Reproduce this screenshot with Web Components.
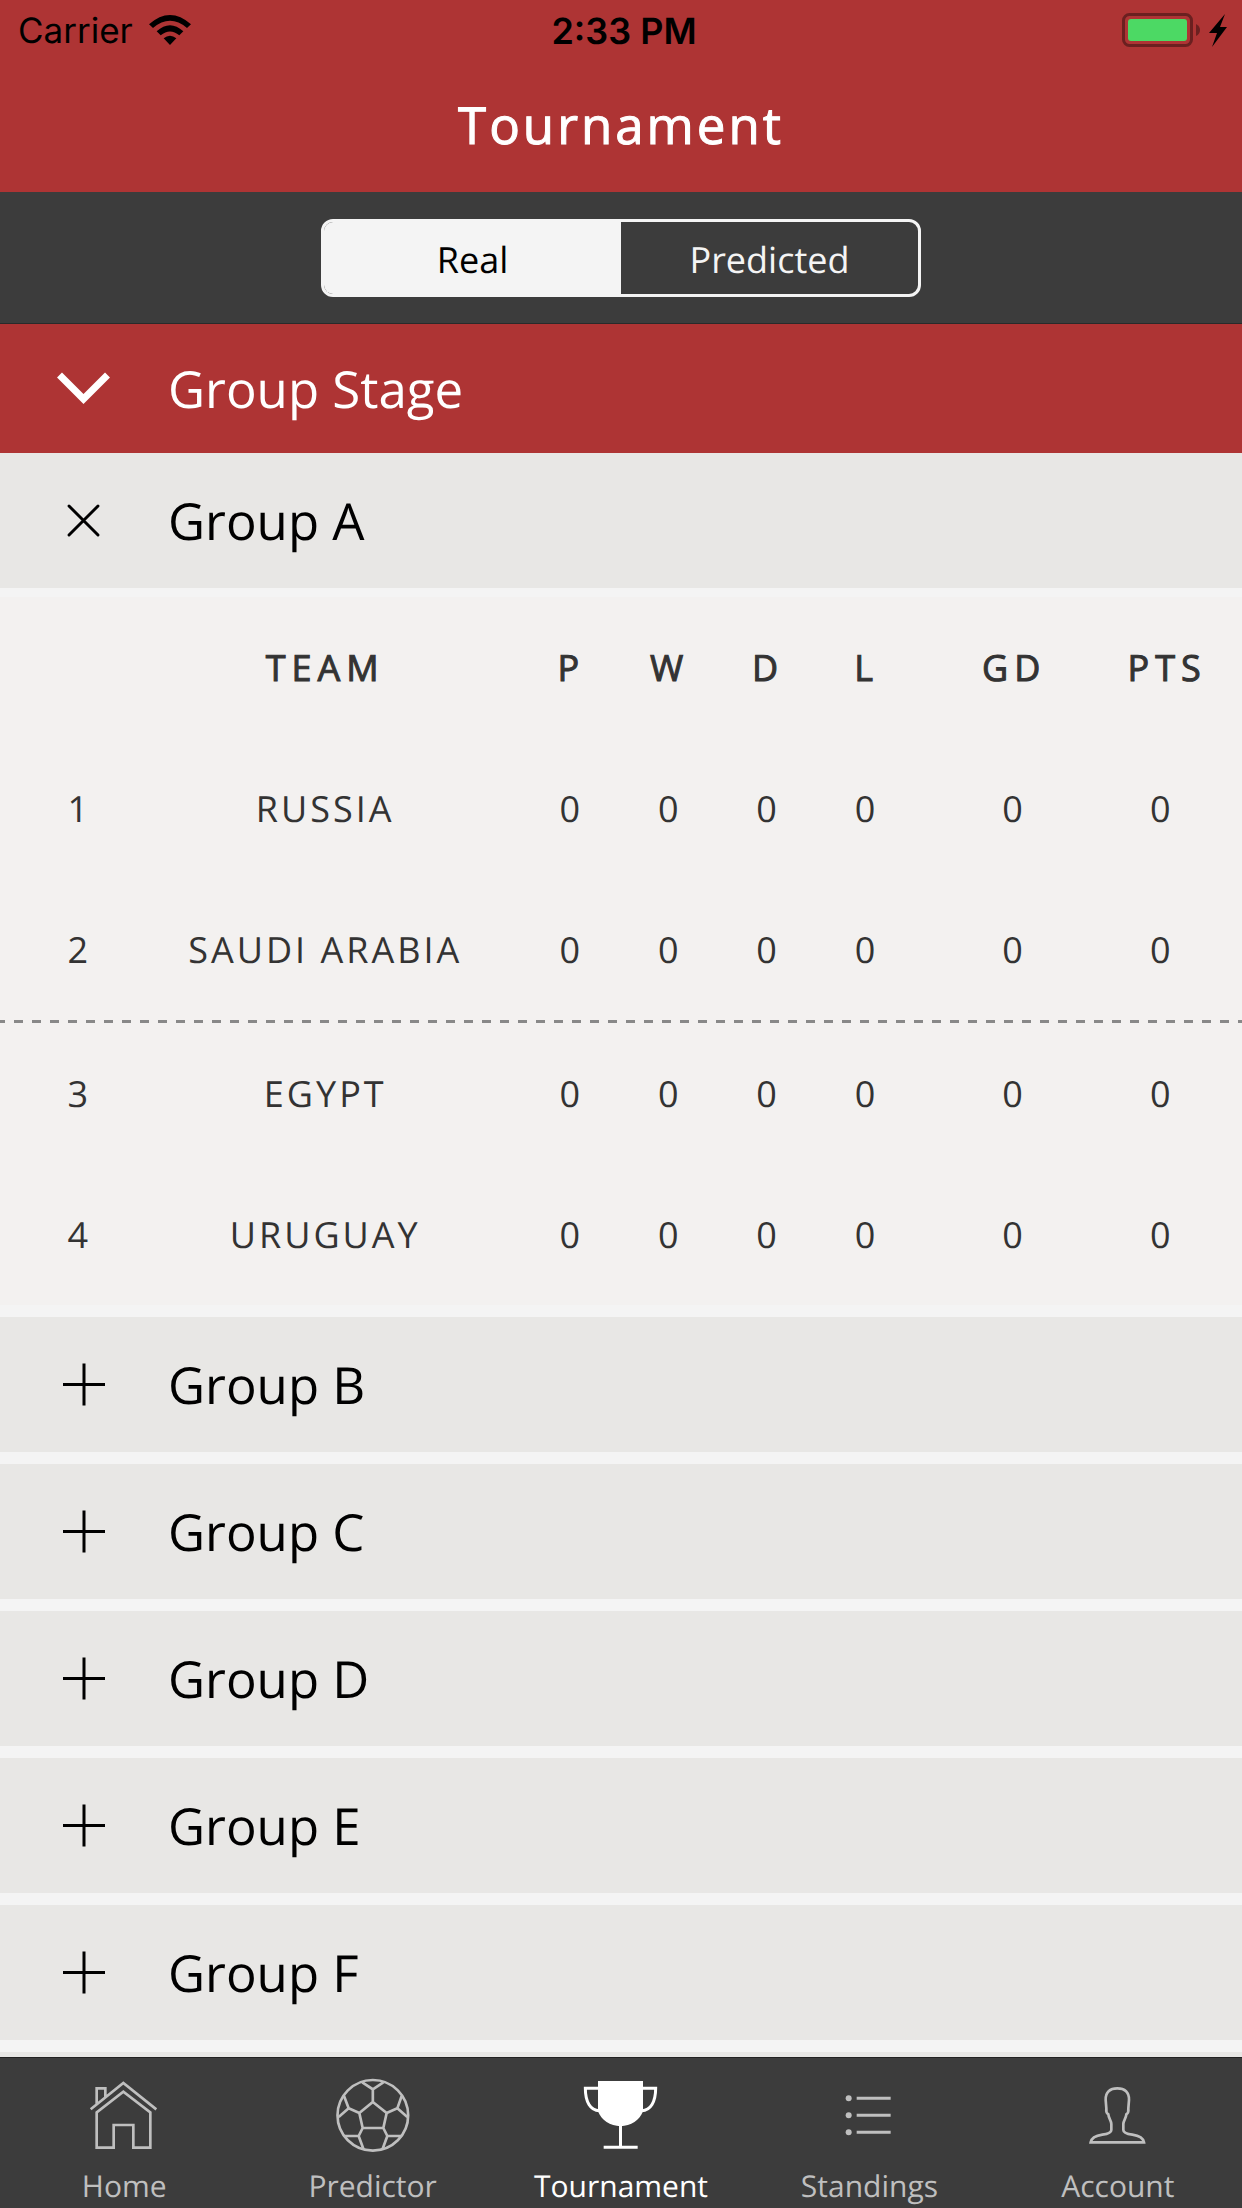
<!DOCTYPE html>
<html lang="en">
<head>
<meta charset="utf-8">
<meta name="viewport" content="width=device-width">
<title>Tournament</title>
<style>
  body { margin: 0; font-family: "Open Sans", "Noto Sans", sans-serif; text-rendering: geometricPrecision; }
</style>
</head>
<body>
<tournament-app></tournament-app>

<script>
const define = (name, css, html, setup) => {
  const template = document.createElement('template');
  template.innerHTML = `<style>*{box-sizing:border-box}${css}</style>${html}`;
  customElements.define(name, class extends HTMLElement {
    connectedCallback() {
      if (this.shadowRoot) return;
      this.attachShadow({ mode: 'open' }).append(template.content.cloneNode(true));
      if (setup) setup(this, this.shadowRoot);
    }
  });
};

define('status-bar', `
  :host { display: grid; grid-template-columns: 1fr auto 1fr; align-items: center; height: 62px;
          padding: 0 12px 0 18px; font: 400 36px/62px Inter, "Liberation Sans", sans-serif; color: #000; }
  .left, .right { display: flex; align-items: center; }
  .left { gap: 16px; font-size: 35px; }
  .right { justify-content: flex-end; }
  time { font-weight: 600; }
  svg { display: block; }
`, `
  <span class="left"><span>Carrier</span>
    <svg width="42" height="62" viewBox="450 0 126 186" aria-label="Wi-Fi" role="img">
      <path d="M450 73Q513 17 576 73L564 84Q513 41 462 84ZM473 94Q513 58 553 94L541 106Q513 83 485 106ZM494 115Q513 100 532 115L513 135Z"/>
    </svg></span>
  <time>2:33 PM</time>
  <span class="right">
    <svg width="108" height="62" viewBox="0 0 108 62" aria-label="Battery charging" role="img">
      <rect x="1.5" y="14.5" width="68" height="31" rx="6" fill="none" stroke="#6b2020" stroke-width="3"/>
      <rect x="6" y="19" width="59" height="22" rx="3" fill="#4cd964"/>
      <path d="M74 24q4 2 4 6t-4 6z" fill="#6b2020"/>
      <path d="M103 14L87 33H95L90 47L105 27H98Z"/>
    </svg></span>
`);

define('title-bar', `
  :host { display: block; background: #ae3434; padding-bottom: 6px; }
  h1 { margin: 0; font-weight: 400; -webkit-text-stroke: 1px currentColor; font-size: 51px; line-height: 124px;
       letter-spacing: 3px; color: #fff; text-align: center; }
`, `<status-bar></status-bar><h1><slot></slot></h1>`);

define('segment-switch', `
  :host { display: flex; justify-content: center; padding: 27px 0 26px; background: #3c3c3c; border-bottom: 1px solid #2a2a2a; }
  div { display: grid; grid-template-columns: 1fr 1fr; width: 600px; max-width: 90%; height: 78px; border: 3px solid #f4f4f4; border-radius: 12px; overflow: hidden; }
  button { border: 0; margin: 0; padding: 3px 0 0; font: inherit; font-size: 36px; line-height: 69px; text-rendering: inherit; background: none; color: #f4f4f4; }
  button[aria-pressed="true"] { background: #f4f4f4; color: #000; }
`, `<div role="group" aria-label="Results">
  <button type="button" aria-pressed="true">Real</button><button type="button" aria-pressed="false">Predicted</button>
</div>`, (host, root) => {
  const buttons = root.querySelectorAll('button');
  buttons.forEach(b => b.addEventListener('click', () =>
    buttons.forEach(o => o.setAttribute('aria-pressed', String(o === b)))));
});

const rowIcons = {
  chevron: '<path d="M2.500 13L26.500 37L50.500 13" stroke-width="7"/>',
  close: '<path d="M12 12L41 41M41 12L12 41" stroke-width="3" stroke-linecap="round"/>',
  plus: '<path d="M6 26.500H48M27 5.500V47.500" stroke-width="3"/>'
};

define('section-row', `
  :host { display: block; --row: 135px; }
  :host([stage]) { --row: 129px; }
  h2 { margin: 0; font-weight: inherit; }
  button { display: flex; align-items: center; gap: 57px; width: 100%; height: var(--row); border: 0; padding: 0 57px;
           font: inherit; font-size: 51px; line-height: 69px; text-rendering: inherit; text-align: left; color: #000; background: #e8e7e5; }
  :host([stage]) button { color: #fff; background: #ae3434; }
  svg { flex: none; display: block; fill: none; stroke: currentColor; }
`, `<h2><button type="button"><svg width="54" height="54" viewBox="0 0 54 54" aria-hidden="true"></svg><span><slot></slot></span></button></h2>`,
(host, root) => {
  const icon = host.getAttribute('icon') || 'plus';
  root.querySelector('svg').innerHTML = rowIcons[icon];
  root.querySelector('button').setAttribute('aria-expanded', String(icon !== 'plus'));
});

define('standings-table', `
  :host { display: block; margin-top: 9px; background: #f3f1f0; color: #333; font-size: 36px; line-height: 49px; }
  table, thead, tbody { display: block; }
  tr { display: grid; align-items: center; padding: 0 31px 0 30px; height: 141px;
       grid-template-columns: minmax(0,1fr) minmax(0,4fr) repeat(4, minmax(0,1fr)) minmax(0,2fr) minmax(0,1fr); }
  tr.cut { height: 144px; padding-bottom: 3px;
       background: linear-gradient(90deg, #888 50%, transparent 50%) -4px 100% / 18px 3px repeat-x; }
  th, td { padding: 0 15px; text-align: center; letter-spacing: 3px; font-weight: 400; white-space: nowrap; }
  thead th { -webkit-text-stroke: 1px currentColor; letter-spacing: 6px; }
`, `<table><thead><tr><td></td></tr></thead><tbody></tbody></table>`, (host, root) => {
  root.querySelector('thead tr').innerHTML = '<td></td>' +
    ['TEAM', 'P', 'W', 'D', 'L', 'GD', 'PTS'].map(t => `<th scope="col">${t}</th>`).join('');
  root.querySelector('tbody').innerHTML = host.getAttribute('teams').split(',').map((team, i) =>
    `<tr class="${i === 1 ? 'cut' : ''}"><td>${i + 1}</td><th scope="row">${team}</th>${'<td>0</td>'.repeat(6)}</tr>`).join('');
});

define('group-list', `
  :host { display: flex; flex-direction: column; gap: 12px; background: #f4f4f4; }
`, `<slot></slot>`);

const tabIcons = {
  home: ['256 168 234 234', '<path d="M273 268L371 189L470 268M291 251V205H317V231M291 277V383H342V315H401V383H452V277L371 215Z"/>'],
  ball: ['1001 168 234 234', '<circle cx="1117.500" cy="286" r="106"/><path d="M1117.500 246L1159 279L1149 324H1087L1077 279ZM1117.500 246V208L1086 187M1117.500 208L1149 187M1077 279L1045 265L1031 228M1045 265L1015 291M1159 279L1191 265L1204 228M1191 265L1221 291M1087 324L1075 348L1089 386M1075 348H1032M1149 324L1161 348L1147 386M1161 348H1204"/>'],
  cup: ['486 168 234 234', '<path fill="currentColor" stroke="none" d="M534 183H669V274C660 300 632 318 601.500 319C571 318 543 300 534 274Z"/><path d="M536 205H496C496 245 511 272 538 272M667 205H707C707 245 692 272 665 272M601.500 316V382M551 382H653" stroke-width="9"/>'],
  list: ['25 168 234 234', '<path d="M105 235H207M105 286H207M105 337H207" stroke-width="9"/><g fill="currentColor" stroke="none"><circle cx="81" cy="235" r="9"/><circle cx="81" cy="286" r="9"/><circle cx="81" cy="337" r="9"/></g>'],
  person: ['770 168 234 234', '<path d="M805 367C807 356 820 347 840 344C856 342 867 339 867 330V312C867 302 859 296 858 283C853 280 851 274 852 265L850 240C849 216 863 205 885 205C907 205 921 216 920 240L918 265C919 274 917 280 912 283C911 296 903 302 903 312V330C903 339 914 342 930 344C950 347 963 356 965 367Z"/>']
};

define('tab-item', `
  :host { flex: 1 1 0; min-width: 0; }
  a { display: flex; flex-direction: column; align-items: center; gap: 14px; padding: 18px 0 4px; color: #bfbfbf;
      font-size: 30px; line-height: 36px; text-decoration: none; }
  :host([current]) a { color: #fff; }
  svg { display: block; fill: none; stroke: currentColor; stroke-width: 8; }
`, `<a href="#"><svg width="78" height="78" aria-hidden="true"></svg><span><slot></slot></span></a>`, (host, root) => {
  const [box, shapes] = tabIcons[host.getAttribute('icon')];
  const svg = root.querySelector('svg');
  svg.setAttribute('viewBox', box);
  svg.innerHTML = shapes;
  if (host.hasAttribute('current')) root.querySelector('a').setAttribute('aria-current', 'page');
});

define('tab-bar', `
  :host { display: block; background: #3c3c3c; border-top: 1px solid #222; }
  nav { display: flex; }
`, `<nav aria-label="Main"><slot></slot></nav>`);

define('tournament-app', `
  :host { display: flex; flex-direction: column; height: 100vh; background: #f4f4f4; }
  main { flex: 1 1 0; min-height: 0; overflow-y: auto; scrollbar-width: none; }
`, `
  <title-bar>Tournament</title-bar>
  <segment-switch></segment-switch>
  <main>
    <section-row stage icon="chevron">Group Stage</section-row>
    <group-list>
      <div><section-row icon="close">Group A</section-row>
        <standings-table teams="RUSSIA,SAUDI ARABIA,EGYPT,URUGUAY"></standings-table></div>
      <section-row>Group B</section-row>
      <section-row>Group C</section-row>
      <section-row>Group D</section-row>
      <section-row>Group E</section-row>
      <section-row>Group F</section-row>
      <section-row></section-row>
    </group-list>
  </main>
  <tab-bar>
    <tab-item icon="home">Home</tab-item>
    <tab-item icon="ball">Predictor</tab-item>
    <tab-item icon="cup" current>Tournament</tab-item>
    <tab-item icon="list">Standings</tab-item>
    <tab-item icon="person">Account</tab-item>
  </tab-bar>
`);
</script>
</body>
</html>
